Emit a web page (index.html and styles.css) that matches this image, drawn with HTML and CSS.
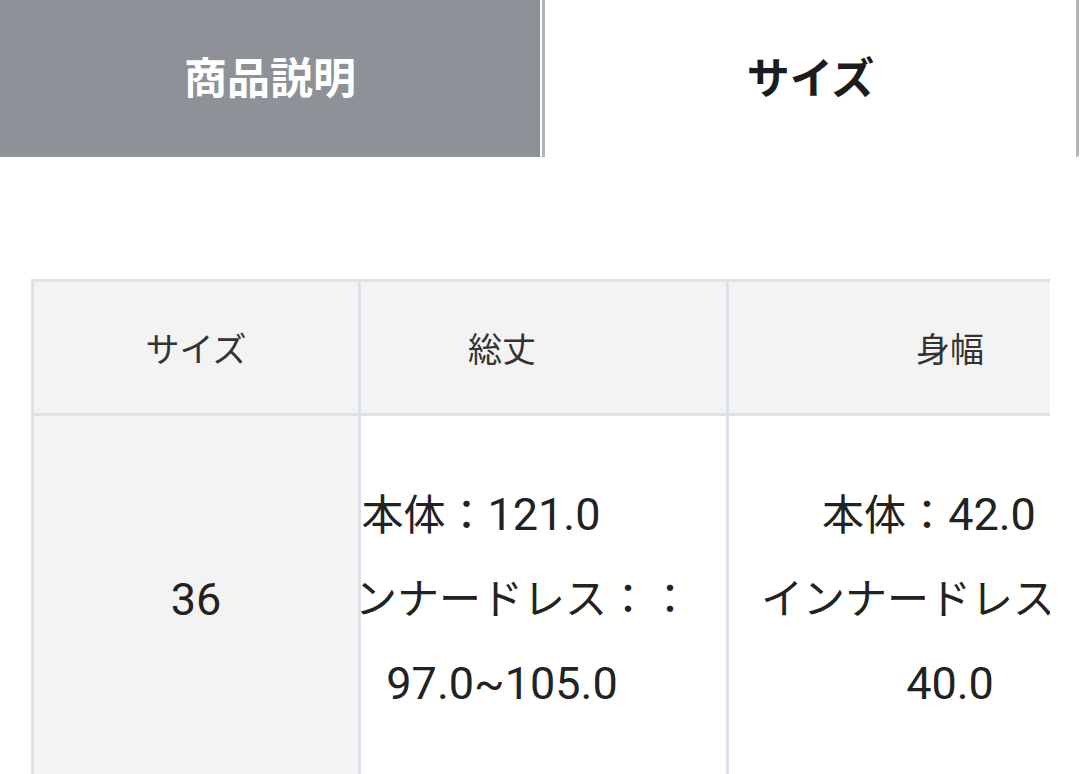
FILE: index.html
```html
<!DOCTYPE html>
<html lang="ja">
<head>
<meta charset="utf-8">
<title>サイズ</title>
<link rel="stylesheet" href="styles.css">
</head>
<body>
<nav class="tabs">
  <div class="tab tab-off">商品説明</div>
  <div class="tab tab-on">サイズ</div>
</nav>
<section class="table-wrap">
  <div class="size-table">
    <div class="cell head c1">サイズ</div>
    <div class="cell head c2">総丈</div>
    <div class="cell head c3">身幅</div>
    <div class="cell body c1"><div class="line"><span class="num">36</span></div></div>
    <div class="cell body c2">
      <div class="line trail">本体：<span class="num">121.0</span></div>
      <div class="line">インナードレス：：</div>
      <div class="line"><span class="num">97.0~105.0</span></div>
    </div>
    <div class="cell body c3">
      <div class="line trail">本体：<span class="num">42.0</span></div>
      <div class="line">インナードレス：：</div>
      <div class="line"><span class="num">40.0</span></div>
    </div>
  </div>
</section>
</body>
</html>
```
FILE: styles.css
```css
html, body {
  margin: 0;
  padding: 0;
  overflow: hidden;
  background: #ffffff;
  font-family: "Roboto", "Noto Sans CJK JP", sans-serif;
}

.tabs {
  display: flex;
  height: 157px;
}

.tab {
  box-sizing: border-box;
  display: flex;
  align-items: center;
  justify-content: center;
  padding-bottom: 7px;
  font-family: "Noto Sans CJK JP", sans-serif;
  font-weight: 700;
  font-size: 43px;
}

.tab-off {
  width: 540px;
  background: #8e9198;
  color: #ffffff;
}

.tab-on {
  flex: 1;
  margin-left: 2px;
  margin-right: 1px;
  border-left: 3px solid #b4b4b4;
  border-right: 3px solid #b4b4b4;
  border-bottom-right-radius: 3px;
  color: #1c1c1c;
}

.table-wrap {
  margin: 122px 0 0 31px;
  width: 1019px;
  overflow: hidden;
}

.size-table {
  display: grid;
  grid-template-columns: 327px 368px 445px;
  width: max-content;
  border-top: 3px solid #dbe2e9;
  border-left: 3px solid #dbe2e9;
}

.cell {
  box-sizing: border-box;
  border-right: 3px solid #dbe2e9;
  border-bottom: 3px solid #dbe2e9;
  display: flex;
  flex-direction: column;
  align-items: center;
  justify-content: center;
  overflow: hidden;
}

.head {
  height: 134px;
  background: #f3f3f3;
  font-family: "Noto Sans CJK JP", sans-serif;
  font-size: 34px;
  color: #333333;
}

.body {
  height: 371px;
  background: #ffffff;
  font-size: 42px;
  line-height: 84px;
  color: #222222;
}

.body.c1 {
  background: #f3f3f3;
}

.c2 {
  padding-right: 83px;
}

.line {
  white-space: nowrap;
}

.num {
  font-size: 45px;
}

.trail {
  padding-right: 1em;
}
```
